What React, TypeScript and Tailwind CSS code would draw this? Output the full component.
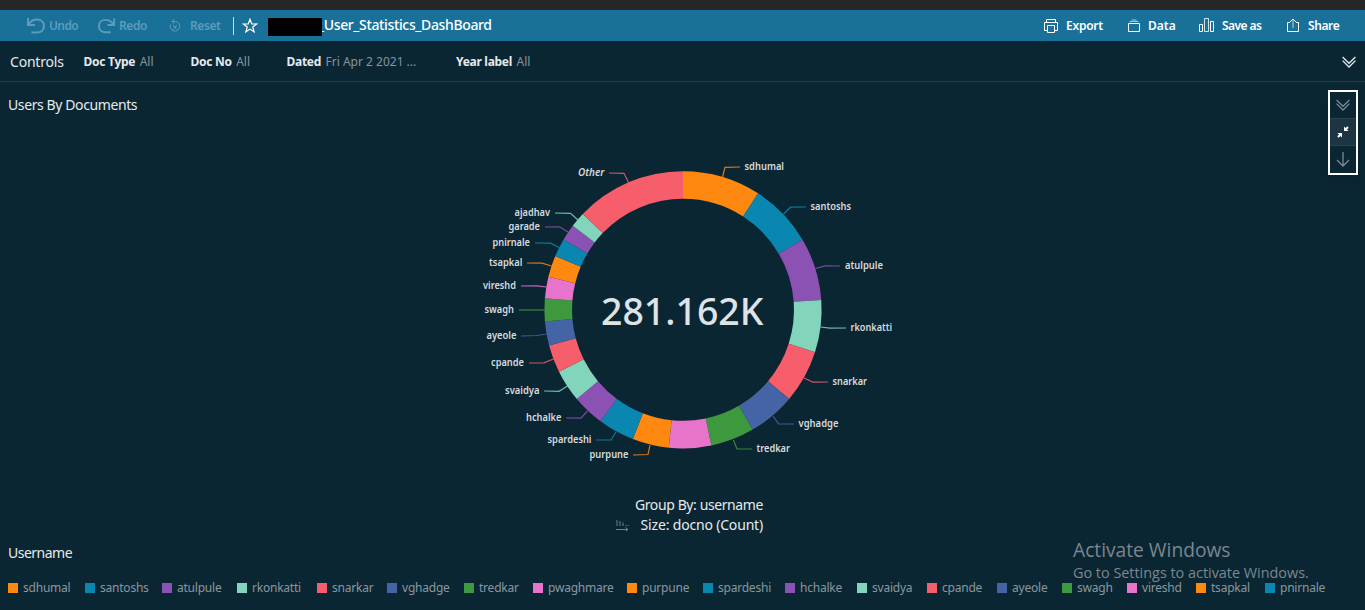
import React from 'react';

type Slice = {
  name: string;
  color: string;
  end: number;
  line?: string;
  x?: number;
  y?: number;
  w?: number;
};

const ORANGE = '#ff8811';
const TEAL = '#0a87b0';
const PURPLE = '#8c52b3';
const MINT = '#82d5bb';
const RED = '#f75e6b';
const BLUE = '#4464a5';
const GREEN = '#3e993e';
const PINK = '#e774ca';

const slices: Slice[] = [
  { name: 'sdhumal', color: ORANGE, end: 32.8, line: '722.5,177 725,167.3 740,167', x: 744.5, y: 170, w: 39.5 },
  { name: 'santoshs', color: TEAL, end: 59.6, line: '783.5,214 790.5,207.2 806,207', x: 810.5, y: 210, w: 40.5 },
  { name: 'atulpule', color: PURPLE, end: 85.9, line: '815.5,268.5 825,265.8 840,266', x: 845, y: 269, w: 38 },
  { name: 'rkonkatti', color: MINT, end: 107.8, line: '820.5,327 830,328.2 846,328', x: 850.5, y: 331, w: 41.5 },
  { name: 'snarkar', color: RED, end: 130, line: '804,378 813,382.2 828,382', x: 832.5, y: 385, w: 34.5 },
  { name: 'vghadge', color: BLUE, end: 149.8, line: '773,416 778.5,423.8 794,424', x: 798.5, y: 427, w: 40 },
  { name: 'tredkar', color: GREEN, end: 168.2, line: '733.5,440 737,449 752,449', x: 756.5, y: 452, w: 33.5 },
  { name: 'pwaghmare', color: PINK, end: 185.9 },
  { name: 'purpune', color: ORANGE, end: 201.2, line: '650,445 648,454.5 633,455', x: 589.5, y: 458, w: 39 },
  { name: 'spardeshi', color: TEAL, end: 216.5, line: '616,432 611,440 596,440', x: 547.5, y: 443, w: 44 },
  { name: 'hchalke', color: PURPLE, end: 230, line: '587.5,411 581,418.2 566,418', x: 526, y: 421, w: 35.5 },
  { name: 'svaidya', color: MINT, end: 243.5, line: '567.5,386 559,391.3 544,391', x: 505, y: 394, w: 34.5 },
  { name: 'cpande', color: RED, end: 255.1, line: '553.5,359 544,362.8 529,363', x: 491, y: 366, w: 33 },
  { name: 'ayeole', color: BLUE, end: 265.2, line: '546.5,334 537,335.5 521,336', x: 486.5, y: 339, w: 30 },
  { name: 'swagh', color: GREEN, end: 274.8, line: '544.5,310 534,310 519,310', x: 484.5, y: 313, w: 29.5 },
  { name: 'vireshd', color: PINK, end: 283.8, line: '546,287 537,285.8 521,286', x: 483, y: 289, w: 33 },
  { name: 'tsapkal', color: ORANGE, end: 292.8, line: '551.5,266 542,263.2 527,263', x: 489, y: 266, w: 33.5 },
  { name: 'pnirnale', color: TEAL, end: 300.5, line: '559,247.5 550.5,243.2 535,243', x: 492.5, y: 246, w: 37.5 },
  { name: 'garade', color: PURPLE, end: 307.3, line: '568,232 559.5,226.8 545,227', x: 508.5, y: 230, w: 31.5 },
  { name: 'ajadhav', color: MINT, end: 313.7, line: '578,220 570.5,213.3 555,213', x: 514.5, y: 216, w: 35.5 },
  { name: 'Other', color: RED, end: 360, line: '628.5,182.5 624,173.3 609,173', x: 578, y: 176, w: 26.5 },
];

const CX = 683;
const CY = 309.8;

const point = (r: number, deg: number) => {
  const a = (deg * Math.PI) / 180;
  return `${(CX + r * Math.sin(a)).toFixed(2)} ${(CY - r * Math.cos(a)).toFixed(2)}`;
};

const arc = (from: number, to: number) =>
  `M${point(138.6, from)} A138.6 138.6 0 0 1 ${point(138.6, to)} L${point(111, to)} A111 111 0 0 0 ${point(111, from)}Z`;

const legendWidths = [77, 77, 75, 80, 70, 77, 69, 94, 76, 82, 72, 70, 70, 65, 65, 69, 69, 70];

function DoubleChevron({ className }: { className: string }) {
  return (
    <svg width="14" height="12" viewBox="0 0 14 12" fill="none" stroke="currentColor" strokeWidth="1.3" className={className}>
      <path d="M.6 1 7 7.3 13.4 1M.6 4.600 7 11l6.400-6.400" />
    </svg>
  );
}

function Donut() {
  return (
    <svg width="1365" height="360" viewBox="0 120 1365 360" className="block shrink-0" fontFamily="'Noto Sans', sans-serif">
      {slices.map((s, i) => (
        <g key={s.name}>
          <path d={arc(i ? slices[i - 1].end : 0, s.end)} fill={s.color} />
          {s.line && <polyline points={s.line} fill="none" stroke={s.color} strokeWidth="1.2" opacity=".85" />}
          {s.line && (
            <text
              x={s.x}
              y={s.y}
              textLength={s.w}
              lengthAdjust="spacingAndGlyphs"
              fontSize="10.500"
              fontWeight="600"
              fontStyle={s.name === 'Other' ? 'italic' : 'normal'}
              fill="#d6dbde"
            >
              {s.name}
            </text>
          )}
        </g>
      ))}
      <text x="601" y="324.500" fontSize="37.500" fontWeight="500" textLength="162.500" lengthAdjust="spacingAndGlyphs" fill="#dfe3e5">
        281.162K
      </text>
    </svg>
  );
}

function Control({ label, value, className }: { label: string; value: string; className: string }) {
  return (
    <div className={`flex shrink-0 gap-[4.500px] whitespace-nowrap pt-[2px] text-[12px] ${className}`}>
      <span className="font-bold tracking-[-0.28px] text-[#e6eaec]">{label}</span>
      <span className="text-[#87949b]">{value}</span>
    </div>
  );
}

export default function App() {
  return (
    <div className="flex h-[610px] w-[1365px] flex-col overflow-hidden bg-[#0b2633] font-['Noto_Sans',sans-serif] text-[#e6eaec]">
      <div className="h-[10px] shrink-0 bg-[#262626]" />

      <header className="flex h-[31px] shrink-0 items-center bg-[#19719a] text-[12px] font-semibold text-white">
        <div className="flex w-[233px] items-center pl-[26px] text-[#5b9cba]">
          <svg width="20" height="18" viewBox="0 0 20 18" fill="none" stroke="currentColor" strokeWidth="2">
            <path d="M2 1v7h7M2.500 7.500C5 3.500 7.500 2.500 11 2.500c4 0 7 2.500 7 6.500s-3 6.500-7 6.500H5.500" />
          </svg>
          <span className="ml-[3px] w-[48px] tracking-[-0.6px]">Undo</span>
          <svg width="19" height="18" viewBox="0 0 20 18" fill="none" stroke="currentColor" strokeWidth="2">
            <path d="M18 1v7h-7M17.500 7.500C15 3.500 12.500 2.500 9 2.500c-4 0-7 2.500-7 6.500s3 6.500 7 6.500h5.500" />
          </svg>
          <span className="ml-[3px] w-[50px] tracking-[-0.4px]">Redo</span>
          <svg width="12" height="15" viewBox="0 0 12 15" fill="none" stroke="currentColor" strokeWidth="1">
            <path d="M3 3.500h3.500a4.800 4.800 0 1 1-5 3M5.500 1 3 3.500 5.500 6M4 7l4 4.500M8 7l-4 4.500" />
          </svg>
          <span className="ml-[9px] tracking-[-0.4px]">Reset</span>
        </div>
        <div className="h-[18px] w-px bg-[#c5dce6]" />
        <svg width="16" height="16" viewBox="0 0 16 16" fill="none" stroke="white" strokeWidth="1.200" className="ml-[8px] shrink-0">
          <path d="m8 1.200 1.700 4.600 4.900.2-3.900 3 1.400 4.800L8 11.100l-4.100 2.700L5.300 9 1.400 6l4.900-.2z" />
        </svg>
        <div className="z-10 ml-[10px] mt-[3px] h-[18px] w-[54px] shrink-0 bg-black" />
        <h1 className="-ml-[4px] -mt-[2px] w-[726px] shrink-0 whitespace-nowrap text-[14px] font-medium tracking-[-0.360px]">_User_Statistics_DashBoard</h1>
        <svg width="14" height="14" viewBox="0 0 14 14" fill="none" stroke="white" className="shrink-0">
          <path d="M2.500 3.500v-3h9v3M3.500 11.500h-3v-8h13v8h-3M3.500 6.500h7v7h-7z" />
        </svg>
        <span className="ml-[8px] w-[62px] shrink-0 tracking-[-0.25px]">Export</span>
        <svg width="12" height="13" viewBox="0 0 12 13" fill="none" stroke="white" className="shrink-0">
          <path d="M.5 4.500h11v8H.5z" />
          <path d="M1.500 2.500h9M3.500 1h5" opacity=".6" />
        </svg>
        <span className="ml-[8px] w-[51px] shrink-0">Data</span>
        <svg width="16" height="16" viewBox="0 0 16 16" fill="none" stroke="white" className="mb-px shrink-0">
          <path d="M.5 7.500h3v7h-3zM11.500 4.500h3v10h-3z" />
          <path d="M5.500 1.500h4v13h-4z" opacity=".8" />
        </svg>
        <span className="ml-[7px] w-[65px] shrink-0 whitespace-nowrap tracking-[-0.55px]">Save as</span>
        <svg width="12" height="15" viewBox="0 0 12 15" fill="none" stroke="white" className="shrink-0">
          <path d="M3 4.500H.5v9h11v-9H9M3 4l3-3 3 3" />
          <path d="M6 10V1" opacity=".7" />
        </svg>
        <span className="ml-[9px] shrink-0 tracking-[-0.400px]">Share</span>
      </header>

      <section className="flex h-[41px] shrink-0 items-center border-b border-[#243d4a] pl-[10px]">
        <h2 className="w-[73.500px] shrink-0 text-[14px] tracking-[-0.2px]">Controls</h2>
        <Control label="Doc Type" value="All" className="w-[107px]" />
        <Control label="Doc No" value="All" className="w-[96px]" />
        <Control label="Dated" value="Fri Apr 2 2021 ..." className="w-[169.500px]" />
        <Control label="Year label" value="All" className="w-[886px]" />
        <DoubleChevron className="mt-[2px] shrink-0" />
      </section>

      <main className="relative flex min-h-0 grow flex-col">
        <h2 className="h-[38px] shrink-0 pl-[8px] pt-[13px] text-[14px] leading-[20px] tracking-[-0.400px]">Users By Documents</h2>
        <Donut />
        <div className="absolute left-[1328px] top-[8px] flex h-[85px] w-[30px] flex-col border-2 border-white text-[#7b8990] shadow-lg">
          <div className="flex h-[27px] items-center justify-center border-b border-[#2b424e]">
            <DoubleChevron className="" />
          </div>
          <div className="flex h-[27px] items-center justify-center border-b border-[#2b424e] bg-[#1d3442]">
            <svg width="12" height="12" viewBox="0 0 12 12" fill="white" stroke="white">
              <path d="M7 .5V5h4.500zM5 11.500V7H.5z" stroke="none" />
              <path d="m8 4 3-3M4 8l-3 3" strokeWidth="2" />
            </svg>
          </div>
          <div className="flex grow items-center justify-center pb-px">
            <svg width="14" height="15" viewBox="0 0 14 15" fill="none" stroke="currentColor" strokeWidth="1.300">
              <path d="M7 0v14M1 8l6 6 6-6" />
            </svg>
          </div>
        </div>

        <div className="flex h-[63px] w-[763px] shrink-0 flex-col items-end pt-[15px] text-[14px] leading-[20px] tracking-[-0.400px]">
          <div>Group By: username</div>
          <div className="flex items-center tracking-[-0.180px]">
            <svg width="13" height="12" viewBox="0 0 13 12" fill="none" stroke="#71808a" className="mr-[12px]">
              <path d="M1 1v6M4 2v5M7 3.500V7M9.500 6.500h1M11.500 6.500h1M0 10.500h12M9.500 8.500l2.500 2-2.500 1.500" />
            </svg>
            Size: docno (Count)
          </div>
        </div>

        <h3 className="h-[30px] shrink-0 pl-[8px] text-[14px] leading-[20px] tracking-[-0.500px]">Username</h3>
        <div className="flex h-[28px] shrink-0 items-start pl-[8px] pt-[6px]">
          {legendWidths.map((width, i) => (
            <div key={slices[i].name} className="flex shrink-0 items-center gap-[5px] text-[12px] leading-[18px] tracking-[-0.22px] text-[#8a979e]" style={{ width }}>
              <span className="h-[10px] w-[10px] shrink-0" style={{ backgroundColor: slices[i].color }} />
              <span>{slices[i].name}</span>
            </div>
          ))}
        </div>
        <div className="pointer-events-none absolute left-[1073px] top-[456px] whitespace-nowrap font-['Open_Sans',sans-serif] text-[#7c878d]">
          <div className="text-[19.200px] leading-[24px]">Activate Windows</div>
          <div className="pt-px text-[14.400px] leading-[20px]">Go to Settings to activate Windows.</div>
        </div>
      </main>
    </div>
  );
}
